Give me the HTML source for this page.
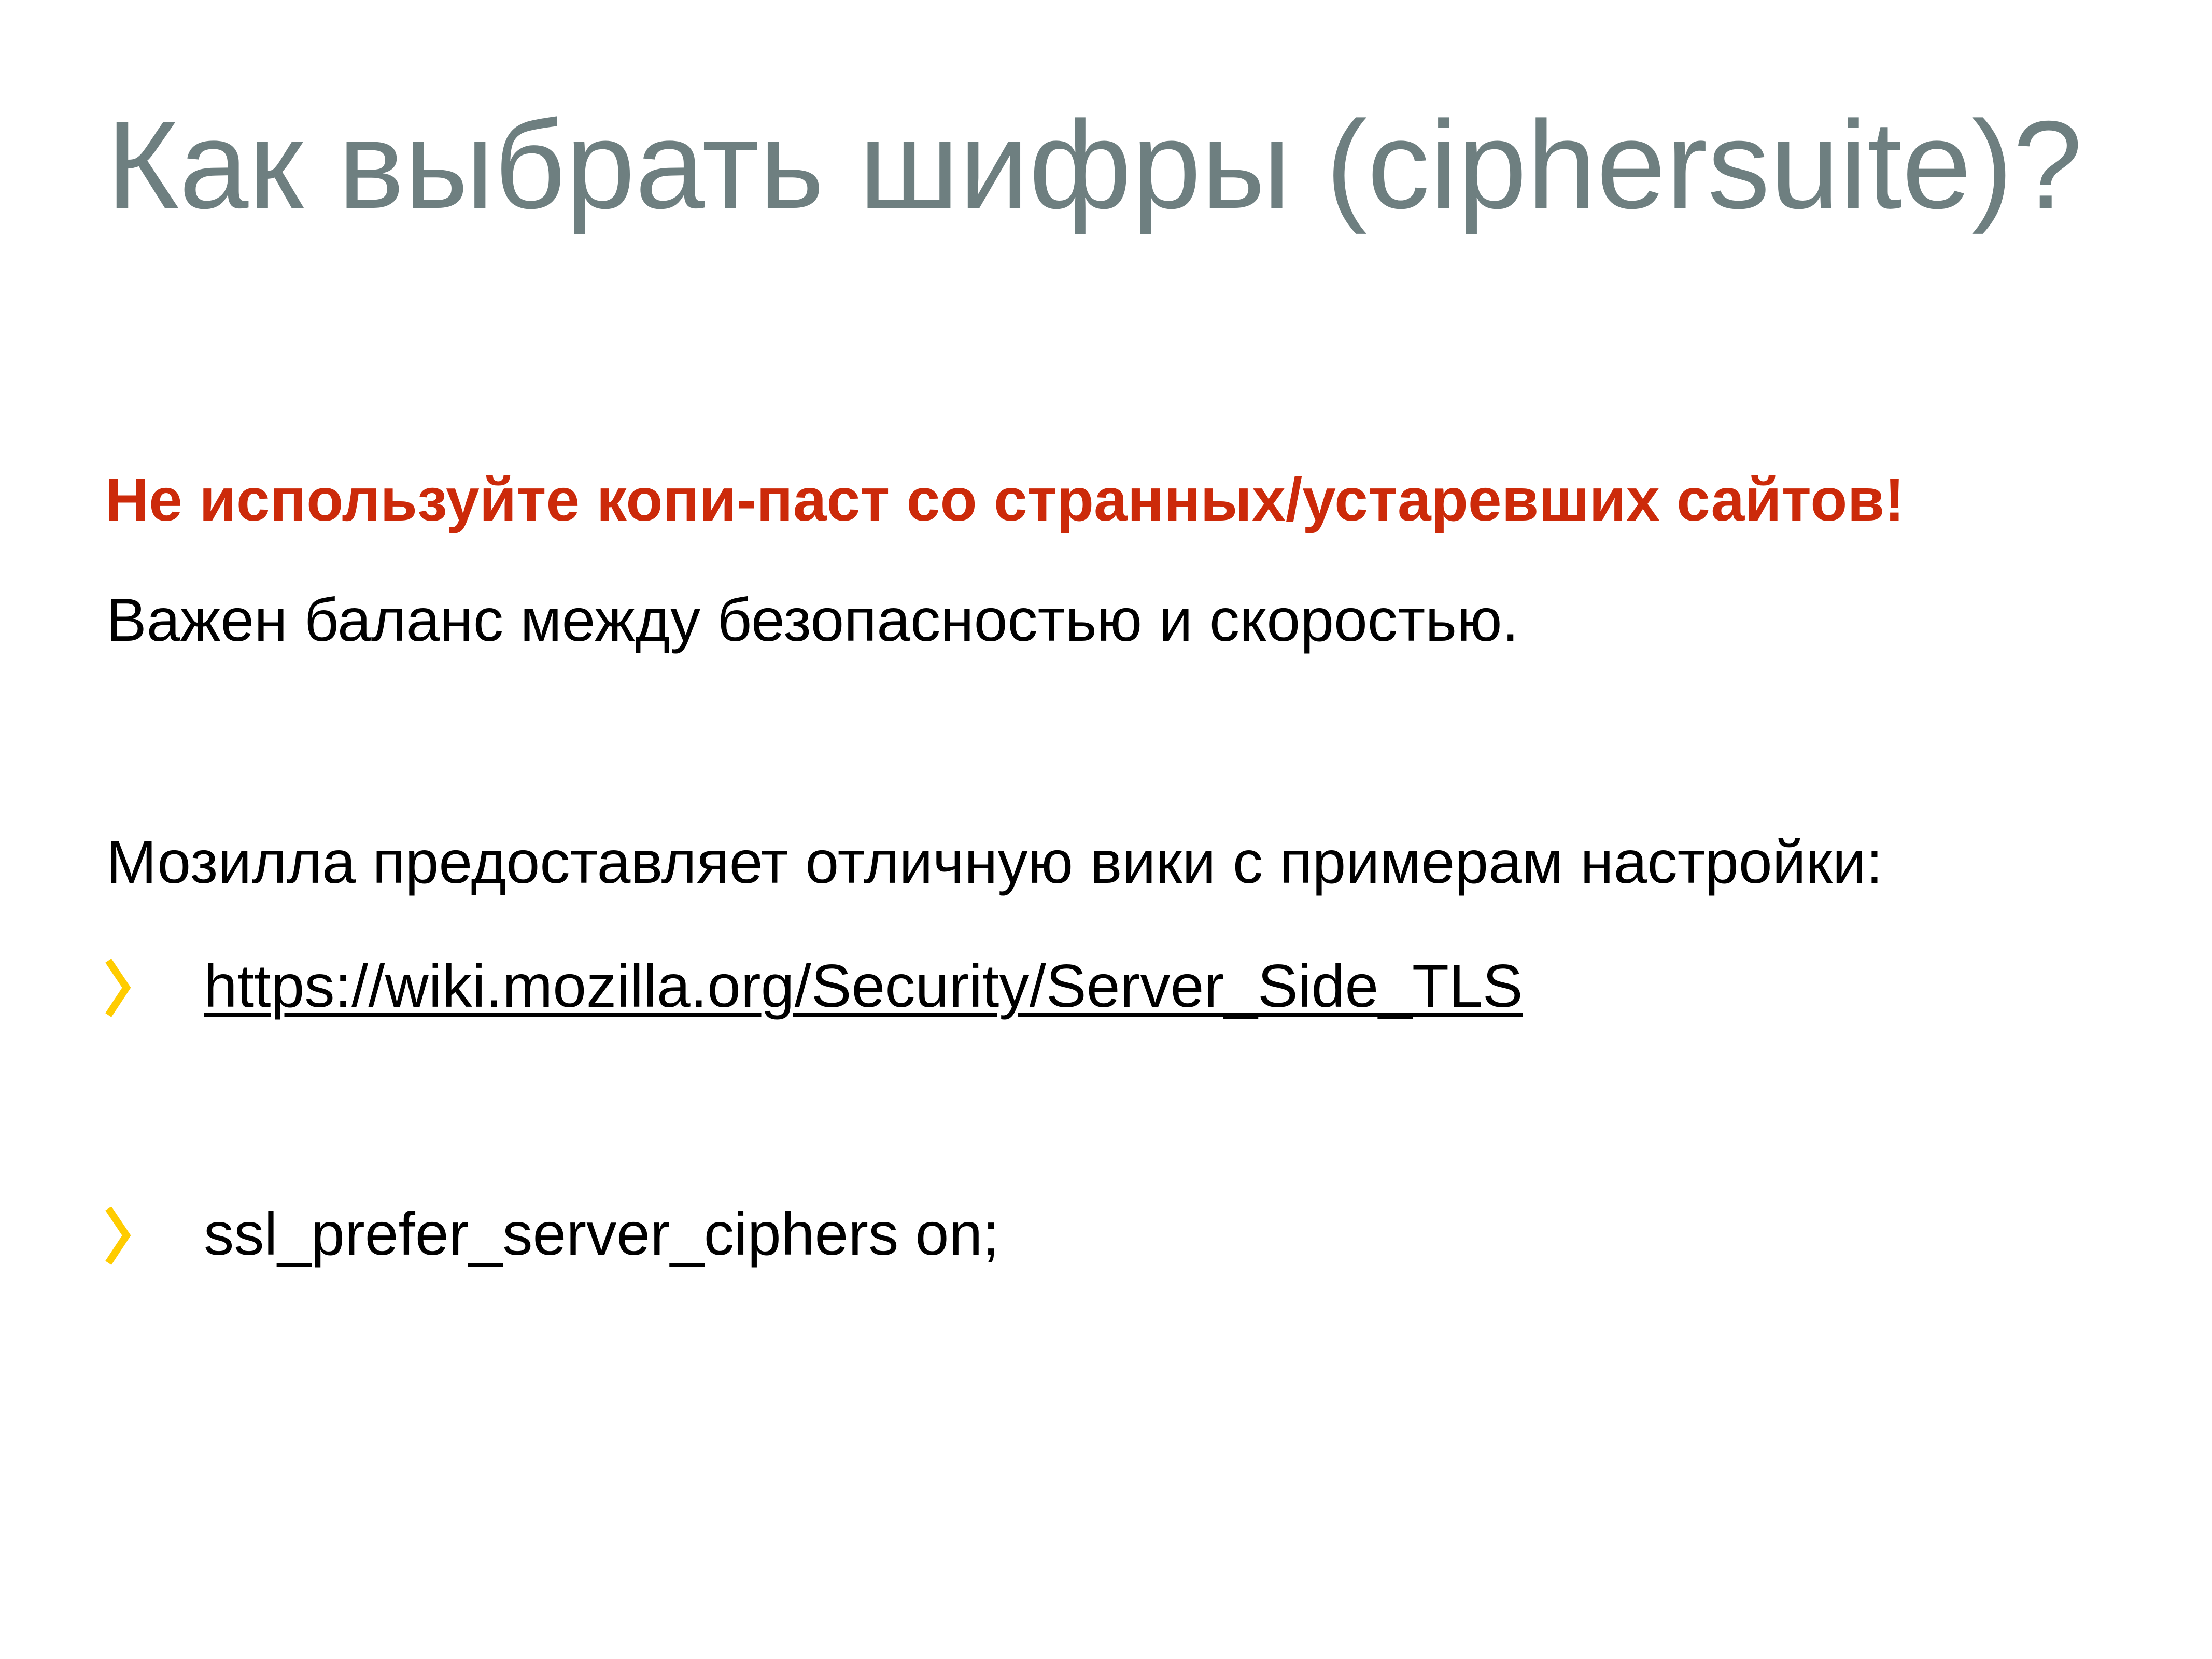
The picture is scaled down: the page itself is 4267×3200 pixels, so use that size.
<!DOCTYPE html>
<html><head><meta charset="utf-8"><style>
html,body{margin:0;padding:0;background:#fff;}
body{width:4267px;height:3200px;position:relative;overflow:hidden;font-family:"Liberation Sans",Arial,sans-serif;}
.t{position:absolute;white-space:nowrap;line-height:1;}
</style></head><body>
<div class="t" style="left:205px;top:198px;font-size:241px;color:#6e7f80;">Как выбрать шифры (ciphersuite)?</div>
<div class="t" style="left:203px;top:906px;font-size:116.5px;font-weight:bold;color:#cc2a0a;">Не используйте копи-паст со странных/устаревших сайтов!</div>
<div class="t" style="left:205px;top:1138px;font-size:116.5px;color:#000;">Важен баланс между безопасностью и скоростью.</div>
<div class="t" style="left:205px;top:1605px;font-size:116.5px;color:#000;">Мозилла предоставляет отличную вики с примерам настройки:</div>
<svg style="position:absolute;left:200px;top:1850px" width="70" height="115"><polyline points="9,3 44,55 9,108" fill="none" stroke="#ffcc00" stroke-width="14"/></svg>
<div class="t" style="left:393px;top:1844px;font-size:116.5px;color:#000;text-decoration:underline;text-decoration-thickness:8px;text-underline-offset:12px;">https://wiki.mozilla.org/Security/Server_Side_TLS</div>
<svg style="position:absolute;left:200px;top:2328px" width="70" height="115"><polyline points="9,3 44,55 9,108" fill="none" stroke="#ffcc00" stroke-width="14"/></svg>
<div class="t" style="left:393px;top:2322px;font-size:116.5px;color:#000;">ssl_prefer_server_ciphers on;</div>
</body></html>
